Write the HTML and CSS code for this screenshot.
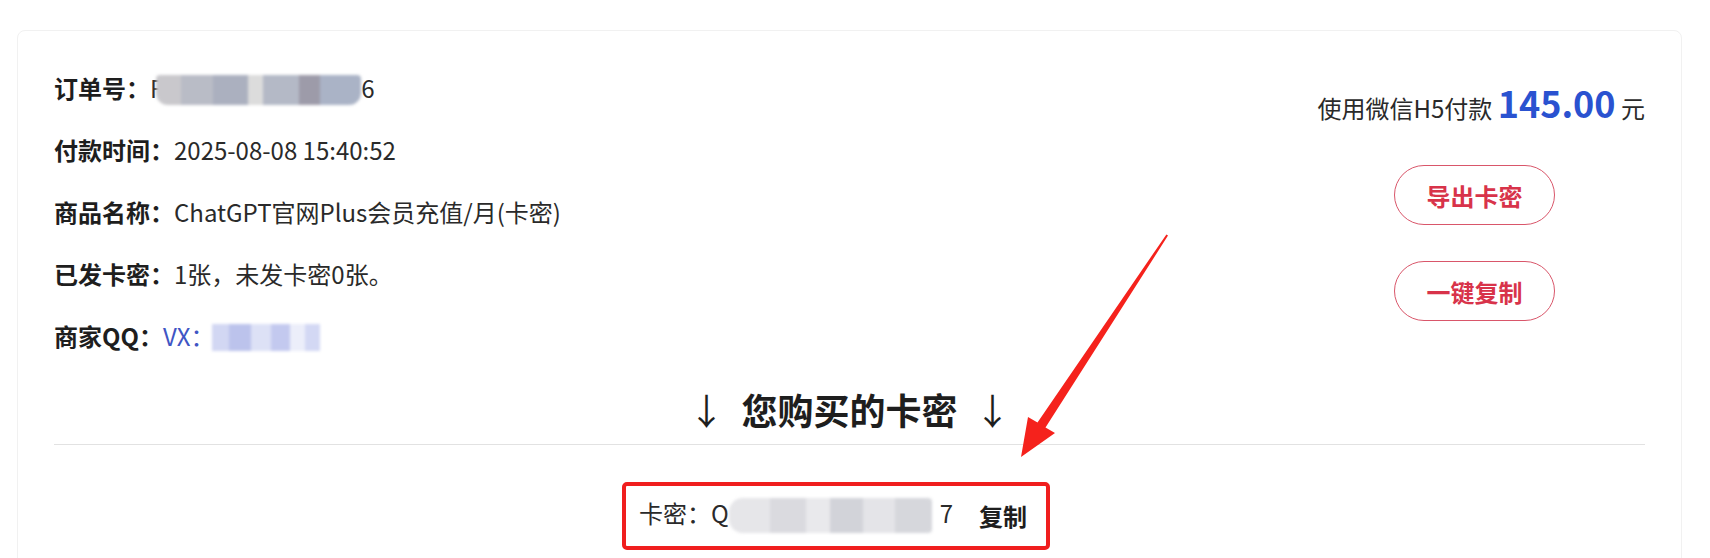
FILE: index.html
```html
<!DOCTYPE html>
<html lang="zh-CN">
<head>
    <meta charset="UTF-8">
    <meta name="viewport" content="width=device-width, initial-scale=1.0">
    <title>订单详情</title>
    <link rel="stylesheet" href="styles.css">
</head>
<body>
    <div class="card">
        <div class="card-top">
            <!-- 订单信息 -->
            <div class="info">
                <div class="row"><span class="label">订单号：</span><span class="val">F<i class="mask mask-order"></i>6</span></div>
                <div class="row"><span class="label">付款时间：</span><span class="val">2025-08-08 15:40:52</span></div>
                <div class="row"><span class="label">商品名称：</span><span class="val">ChatGPT官网Plus会员充值/月(卡密)</span></div>
                <div class="row"><span class="label">已发卡密：</span><span class="val">1张，未发卡密0张。</span></div>
                <div class="row"><span class="label">商家QQ：</span><span class="val link">VX：<i class="mask mask-vx"></i></span></div>
            </div>

            <!-- 付款与操作 -->
            <div class="pay">
                <div class="price">使用微信H5付款 <b>145.00</b> 元</div>
                <button type="button" class="btn">导出卡密</button>
                <button type="button" class="btn">一键复制</button>
            </div>
        </div>

        <h2 class="title"><span class="arrow">↓</span>您购买的卡密<span class="arrow">↓</span></h2>
        <hr class="line">

        <div class="code-row">
            <span class="code">卡密：Q<i class="mask mask-code"></i>7</span>
            <span class="copy">复制</span>
        </div>
    </div>

    <!-- 截图上的标注 -->
    <svg class="annot" width="1710" height="558" viewBox="0 0 1710 558">
        <rect x="624" y="484" width="424" height="64" rx="3" fill="none" stroke="#f01e1e" stroke-width="4"/>
        <polygon fill="#f5221c" points="1168,235.6 1045.5,427.6 1055,433 1021,457 1028,417 1037.5,422.4 1166.4,234.4"/>
    </svg>
</body>
</html>
```

FILE: styles.css
```css
* { box-sizing: border-box;
}

body {
    margin: 0;
    background: #fff;
    font-family: 'Noto Sans CJK SC', 'Noto Sans', sans-serif;
    color: #222;
    overflow: hidden;
}
.card {
    margin: 30px 0 0 17px;
    width: 1665px;
    height: 560px;
    padding: 26px 36px 0;
    border: 1px solid #f1f1f1;
    border-radius: 8px;
    background: #fff;
}
.card-top {
    display: flex;
    justify-content: space-between;
}
.row {
    height: 62px;
    line-height: 62px;
    font-size: 24px;
    white-space: nowrap;
}
.label {
    font-weight: bold;
    color: #1e1e1e;
}
.val {
    color: #2a2a2a;
}
.link {
    color: #4055c4;
}
.mask {
    display: inline-block;
    vertical-align: middle;
    filter: blur(1.5px);
}
.mask-order {
    width: 205px;
    height: 30px;
    margin: 0 0 2px -7px;
    background: linear-gradient(90deg, #c9c8cc 0 12%, #b9bcc6 12% 28%, #abb0bf 28% 45%, #dcdcdc 45% 52%, #b4b9c6 52% 70%, #9d9ba9 70% 80%, #aab3c6 80% 100%);
    border-radius: 4px 4px 12px 12px;
}
.mask-vx {
    width: 108px;
    height: 27px;
    margin: 0 0 3px -3px;
    background: linear-gradient(90deg, #d2d7f3 0 16%, #bcc3ec 16% 36%, #dde1f6 36% 55%, #c3c9ef 55% 72%, #eceefa 72% 86%, #d3d8f4 86% 100%);
}
.mask-code {
    width: 203px;
    height: 35px;
    margin: 0 8px 2px 0;
    background: linear-gradient(90deg, #e6e6e9 0 20%, #dadadf 20% 38%, #e9e9ec 38% 50%, #d2d3d9 50% 66%, #e4e4e8 66% 82%, #d6d7dc 82% 100%);
    border-radius: 14px 4px 4px 14px;
}
.pay {
    display: flex;
    flex-direction: column;
    align-items: flex-end;
    padding-top: 20px;
}
.price {
    font-size: 24px;
    line-height: 50px;
    color: #2a2a2a;
    white-space: nowrap;
}
.price b {
    font-size: 36px;
    color: #2a52d0;
}
.btn {
    width: 161px;
    height: 60px;
    margin: 32px 90px 0 0;
    font-family: inherit;
    font-size: 24px;
    font-weight: bold;
    color: #d8334a;
    background: #fff;
    border: 1px solid #d9566a;
    border-radius: 30px;
    cursor: pointer;
}
.btn + .btn {
    margin-top: 36px;
}
.title {
    margin: 17px 0 0;
    font-size: 36px;
    line-height: 50px;
    text-align: center;
    color: #1e1e1e;
}
.arrow {
    font-weight: normal;
    margin: 0 17px;
}
.line {
    margin: 10px 0 0;
    border: none;
    border-top: 1px solid #e2e2e2;
}
.code-row {
    display: flex;
    justify-content: center;
    align-items: center;
    margin-top: 50px;
    height: 40px;
    font-size: 24px;
    color: #2a2a2a;
}
.copy {
    margin-left: 26px;
    padding-right: 33px;
    font-weight: bold;
    color: #1e1e1e;
}
.annot {
    position: absolute;
    top: 0;
    left: 0;
    pointer-events: none;
}
```
